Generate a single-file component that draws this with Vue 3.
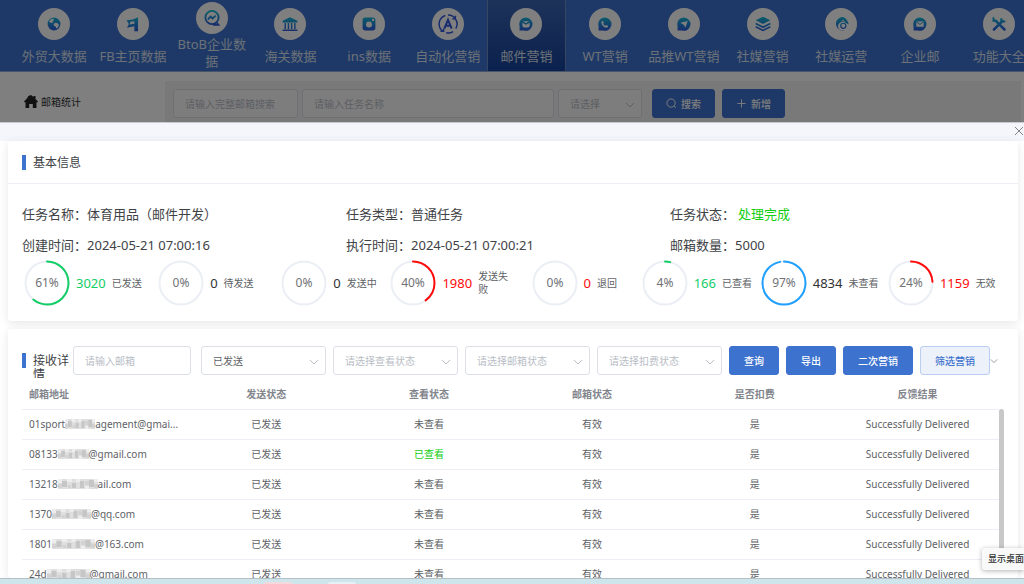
<script setup>
import { ref } from 'vue'

const navItems = [
  { label: '外贸大数据', icon: 'globe' },
  { label: 'FB主页数据', icon: 'flag' },
  { label: 'BtoB企业数据', icon: 'search', tall: true },
  { label: '海关数据', icon: 'bank' },
  { label: 'ins数据', icon: 'camera' },
  { label: '自动化营销', icon: 'auto' },
  { label: '邮件营销', icon: 'mail', active: true },
  { label: 'WT营销', icon: 'phone' },
  { label: '品推WT营销', icon: 'plane' },
  { label: '社媒营销', icon: 'layers' },
  { label: '社媒运营', icon: 'bird' },
  { label: '企业邮', icon: 'envelope' },
  { label: '功能大全', icon: 'tools' },
]

const info = [
  { label: '任务名称：', value: '体育用品（邮件开发）' },
  { label: '任务类型：', value: '普通任务' },
  { label: '任务状态：', value: '处理完成', done: true },
  { label: '创建时间：', value: '2024-05-21 07:00:16' },
  { label: '执行时间：', value: '2024-05-21 07:00:21' },
  { label: '邮箱数量：', value: '5000' },
]

const stats = [
  { percent: 61, count: 3020, label: '已发送', tone: 'green' },
  { percent: 0, count: 0, label: '待发送', tone: 'plain' },
  { percent: 0, count: 0, label: '发送中', tone: 'plain' },
  { percent: 40, count: 1980, label: '发送失败', tone: 'red' },
  { percent: 0, count: 0, label: '退回', tone: 'red' },
  { percent: 4, count: 166, label: '已查看', tone: 'green' },
  { percent: 97, count: 4834, label: '未查看', tone: 'blue' },
  { percent: 24, count: 1159, label: '无效', tone: 'red' },
]

const sent = ref('已发送')
const filters = ['请选择查看状态', '请选择邮箱状态', '请选择扣费状态']
const columns = ['邮箱地址', '发送状态', '查看状态', '邮箱状态', '是否扣费', '反馈结果']

const rows = [
  { head: '01sport', tail: 'agement@gmai...', mask: 30, seen: '未查看' },
  { head: '08133', tail: '@gmail.com', mask: 31, seen: '已查看' },
  { head: '13218', tail: 'ail.com', mask: 40, seen: '未查看' },
  { head: '1370', tail: '@qq.com', mask: 39, seen: '未查看' },
  { head: '1801', tail: '@163.com', mask: 43, seen: '未查看' },
  { head: '24d', tail: '@gmail.com', mask: 43, seen: '未查看' },
]
</script>

<template>
  <div class="page">
    <div class="backdrop">
      <svg class="defs" width="0" height="0" aria-hidden="true">
        <defs>
          <linearGradient id="ig" x1="0" y1="4" x2="0" y2="20" gradientUnits="userSpaceOnUse">
            <stop offset="0" stop-color="#12bcd8" />
            <stop offset="1" stop-color="#2f56dc" />
          </linearGradient>
        </defs>
      </svg>
      <nav class="nav">
        <a v-for="n in navItems" :key="n.label" href="#" class="nav-item" :class="{ active: n.active, tall: n.tall }">
          <span class="disc">
            <svg viewBox="0 0 24 24" fill="url(#ig)">
              <template v-if="n.icon === 'globe'">
                <circle cx="12" cy="12" r="7" />
                <path fill="#fff" d="M6.500 9.500l1.800-2.500 3-1 .5 2-1.500 1.500.5 1.500-2.300-.5zM11.500 12l2-1.500 2 .5 2 2-1.500 3-1.500 1-.5-2-2-1z" />
              </template>
              <path v-else-if="n.icon === 'flag'" d="M5 8l7-1 5.500-2.500V20h-4v-5.500l-8 1.500 2-4zM9 9.500l-.5 3 5-.8V9z" fill-rule="evenodd" />
              <g v-else-if="n.icon === 'search'" fill="none" stroke="url(#ig)" stroke-width="2" stroke-linecap="round">
                <circle cx="12" cy="11.500" r="7.200" />
                <path d="M17.500 17.500l1.500 2h-5M8 13l2.500-2.500 2 2 3-2.500" />
              </g>
              <g v-else-if="n.icon === 'bank'">
                <path d="M12 4.500l8 4v1.800H4V8.500zM4 18h16v1.600H4z" />
                <path d="M6 11h1.600v6.500H6zM9.500 11h1.600v6.500H9.500zM13 11h1.600v6.500H13zM16.500 11h1.600v6.500h-1.600z" />
              </g>
              <g v-else-if="n.icon === 'camera'">
                <rect x="5" y="5" width="14" height="14" rx="3" />
                <circle cx="12" cy="12.500" r="3.300" fill="#fff" />
                <circle cx="16.500" cy="7.500" r="1.300" fill="#fff" />
              </g>
              <g v-else-if="n.icon === 'auto'" fill="none" stroke="#2f56dc" stroke-width="1.600">
                <path d="M6.500 20A9.800 9.800 0 0 1 9 2.700M3.800 19.800h3.400v-3M12 2.200A9.800 9.800 0 0 1 20.500 17M10 21.600a9.800 9.800 0 0 0 7.500-1.300M16.800 6.500l3-.5.400-3" />
                <path d="M8 17l4-9.500L16 17M9.500 14h5" stroke-width="2.200" />
              </g>
              <g v-else-if="n.icon === 'mail'">
                <path d="M12 5a7.200 7.200 0 1 1-2.500 14H5v-4.500A7.200 7.200 0 0 1 12 5z" />
                <path fill="#fff" d="M8 10.500l4 2.200 4-2.200v3.200a2 2 0 0 1-2 2h-4a2 2 0 0 1-2-2zM8.500 9h7L12 11.200z" />
              </g>
              <g v-else-if="n.icon === 'phone'">
                <path d="M12 5a7.200 7.200 0 1 1-2.500 14H5v-4.500A7.200 7.200 0 0 1 12 5z" />
                <path fill="#fff" d="M9.500 8.500l1.300 2.200-.8 1c.5 1 1.300 1.700 2.300 2.200l1-.9 2.200 1.300c-.5 1.500-1.500 2-2.800 1.600-2.300-.7-4-2.400-4.600-4.700-.2-1.200.3-2.200 1.400-2.700z" />
              </g>
              <g v-else-if="n.icon === 'plane'">
                <path d="M12 5a7.200 7.200 0 1 1-2.500 14H5v-4.500A7.200 7.200 0 0 1 12 5z" />
                <path fill="#fff" d="M8 10.500l8-1.800-2.500 7.300-1.500-3z" />
              </g>
              <g v-else-if="n.icon === 'layers'">
                <path d="M12 4l8 4-8 4-8-4z" />
                <path fill="none" stroke="url(#ig)" stroke-width="1.800" d="M4 11.500l8 4 8-4M4 15l8 4 8-4" />
              </g>
              <g v-else-if="n.icon === 'bird'">
                <path d="M12 4.500c3.500-.5 5.500 1.500 7.500 5l1 3-3-1.500a5 5 0 1 0-1.500 8A7.500 7.500 0 1 1 12 4.500z" />
                <circle cx="14.500" cy="14" r="2.800" fill="#fff" stroke="url(#ig)" stroke-width="1.300" />
                <path fill="#fff" d="M13 7l4 2.500-3.500-.8z" />
              </g>
              <g v-else-if="n.icon === 'envelope'">
                <path d="M12 5a7.200 7.200 0 1 1-2.500 14H5v-4.500A7.200 7.200 0 0 1 12 5z" />
                <path fill="#fff" d="M8 9.200h8V15H8z" />
                <path fill="none" stroke="url(#ig)" d="M8 9.500l4 3 4-3" />
              </g>
              <g v-else fill="none" stroke="url(#ig)" stroke-width="2.800" stroke-linecap="round">
                <path d="M6.500 18L16 8.500M8.500 8.500L18 18" />
                <path d="M14.500 6.500v2.800h3.500M6 5.500v3h3" stroke-width="2.200" />
              </g>
            </svg>
          </span>
          <span class="nav-label">{{ n.label }}</span>
        </a>
      </nav>
      <div class="workspace">
        <aside class="side">
          <svg class="home" viewBox="0 0 14 14" fill="#222"><path d="M7 0l2.500 2V1h2v3L14 6.500l-.7.900-.8-.5V13H8.800V9H5.200v4H1.500V6.900l-.8.5L0 6.500 3.300 3l1-2z" /></svg>
          <span>邮箱统计</span>
        </aside>
        <form class="toolbar" @submit.prevent>
          <input class="field bar-mail" type="text" placeholder="请输入完整邮箱搜索" aria-label="邮箱" />
          <input class="field bar-task" type="text" placeholder="请输入任务名称" aria-label="任务名称" />
          <span class="pick bar-pick">
            <select class="field empty" aria-label="类型"><option>请选择</option></select>
            <svg class="chev" viewBox="0 0 10 10"><path d="M1 3l4 4 4-4" /></svg>
          </span>
          <button class="btn bar-first" type="submit">
            <svg viewBox="0 0 12 12"><circle cx="5.500" cy="5.500" r="4.500" /><path d="M8.800 8.800l2 2" /></svg>搜索
          </button>
          <button class="btn" type="button">
            <svg viewBox="0 0 12 12"><path d="M6 1.500v9M1.500 6h9" /></svg>新增
          </button>
        </form>
      </div>
    </div>

    <main class="drawer">
      <header class="drawer-head">
        <button class="close" type="button" aria-label="关闭">
          <svg viewBox="0 0 10 10"><path d="M1 1l8 8M9 1L1 9" /></svg>
        </button>
      </header>

      <section class="card">
        <div class="card-head"><h2 class="title">基本信息</h2></div>
        <dl class="info">
          <div v-for="i in info" :key="i.label" class="info-item">
            <dt>{{ i.label }}</dt>
            <dd :class="{ done: i.done }">{{ i.value }}</dd>
          </div>
        </dl>
        <div class="stats">
          <div v-for="s in stats" :key="s.label" class="stat" :class="s.tone">
            <svg class="ring" viewBox="0 0 46 46">
              <circle class="track" cx="23" cy="23" r="21.500" />
              <circle v-if="s.percent" class="arc" cx="23" cy="23" r="21.500" pathLength="100" :stroke-dasharray="`${s.percent} 100`" transform="rotate(-90 23 23)" />
              <text x="23" y="27" text-anchor="middle">{{ s.percent }}%</text>
            </svg>
            <span class="count">{{ s.count }}</span>
            <span class="stat-label">{{ s.label }}</span>
          </div>
        </div>
      </section>

      <section class="card detail">
        <form class="filters" @submit.prevent>
          <h2 class="title narrow">接收详情</h2>
          <input class="field mail" type="text" placeholder="请输入邮箱" aria-label="邮箱" />
          <span class="pick">
            <select v-model="sent" class="field" aria-label="发送状态"><option>已发送</option></select>
            <svg class="chev" viewBox="0 0 10 10"><path d="M1 3l4 4 4-4" /></svg>
          </span>
          <span v-for="f in filters" :key="f" class="pick">
            <select class="field empty" :aria-label="f"><option>{{ f }}</option></select>
            <svg class="chev" viewBox="0 0 10 10"><path d="M1 3l4 4 4-4" /></svg>
          </span>
          <button class="btn" type="submit">查询</button>
          <button class="btn" type="button">导出</button>
          <button class="btn" type="button">二次营销</button>
          <span class="more">
            <button class="btn light" type="button">筛选营销</button>
            <svg class="chev dark" viewBox="0 0 10 10"><path d="M1 3l4 4 4-4" /></svg>
          </span>
        </form>
        <div class="table-wrap">
          <table>
            <thead>
              <tr><th v-for="c in columns" :key="c" scope="col">{{ c }}</th></tr>
            </thead>
            <tbody>
              <tr v-for="r in rows" :key="r.head">
                <td>
                  <span class="email">{{ r.head }}<svg class="mask" :style="{ width: r.mask + 'px' }" viewBox="0 0 40 10" preserveAspectRatio="none" aria-hidden="true">
                    <rect width="40" height="10" fill="#dfdfdf" />
                    <path fill="#c6c6c6" d="M4 2h5v6H4zM14 4h4v5h-4zM22 2h4v7h-4zM31 1h5v7h-5z" />
                    <path fill="#ededed" d="M0 0h4v4H0zM9 0h5v3H9zM18 0h4v3h-4zM27 7h4v3h-4zM36 0h4v3h-4z" />
                    <path fill="#d2d2d2" d="M0 5h4v4H0zM10 6h3v3h-3zM27 2h4v4h-4zM36 5h4v4h-4z" />
                  </svg>{{ r.tail }}</span>
                </td>
                <td>已发送</td>
                <td :class="{ seen: r.seen === '已查看' }">{{ r.seen }}</td>
                <td>有效</td>
                <td>是</td>
                <td>Successfully Delivered</td>
              </tr>
            </tbody>
          </table>
          <span class="thumb"></span>
        </div>
      </section>
    </main>

    <div class="taskbar"><span class="app pink"></span><span class="app"></span></div>
    <div class="tip" role="tooltip">显示桌面</div>
  </div>
</template>

<style>
body {
  margin: 0;
  overflow: hidden;
}
</style>

<style scoped>
* {
  box-sizing: border-box;
}
.page {
  position: relative;
  display: flex;
  flex-direction: column;
  height: 100vh;
  overflow: hidden;
  background: #fff;
  color: #606266;
  font: 10px/16px "Noto Sans", "Noto Sans CJK SC", sans-serif;
}
button, input, select {
  font: inherit;
  margin: 0;
}
.defs {
  position: absolute;
}
.backdrop {
  position: relative;
  flex: none;
  overflow: hidden;
  background: #fff;
}
.backdrop::after {
  content: "";
  position: absolute;
  inset: 0;
  background: rgba(0, 0, 0, 0.5);
  pointer-events: none;
}
.nav {
  display: grid;
  grid-template-columns: repeat(13, minmax(0, 1fr));
  height: 72px;
  padding-left: 15px;
  margin-right: -14px;
  background: #3d72ce;
  border-bottom: 1px solid #8fa8d4;
}
.nav-item {
  display: flex;
  flex-direction: column;
  align-items: center;
  justify-content: center;
  gap: 8px;
  padding-top: 1px;
  color: #d8e0ee;
  font-size: 13px;
  line-height: 17px;
  text-align: center;
  text-decoration: none;
}
.nav-item.tall {
  gap: 2px;
}
.nav-item.active {
  background: linear-gradient(#3a66b4, #17439c);
  border: solid #6c8cc4;
  border-width: 0 1px;
}
.nav-label {
  width: 76px;
}
.disc {
  display: flex;
  align-items: center;
  justify-content: center;
  width: 32px;
  height: 32px;
  border-radius: 50%;
  background: #fff;
}
.disc svg {
  width: 22px;
  height: 22px;
}
.workspace {
  display: flex;
  height: 50px;
}
.side {
  display: flex;
  gap: 3px;
  width: 165px;
  flex: none;
  padding: 22px 0 0 24px;
  color: #303133;
}
.home {
  width: 14px;
  height: 14px;
  margin-top: 1px;
}
.toolbar {
  flex: 1;
  display: flex;
  align-items: flex-start;
  gap: 4px;
  margin: 9px 3px 0 0;
  padding: 8px;
  background: #f2f2f2;
}
.field {
  display: block;
  width: 100%;
  height: 29px;
  padding: 0 11px;
  border: 1px solid #dcdfe6;
  border-radius: 3px;
  background: #fff;
  color: #606266;
  outline: none;
  appearance: none;
}
.field::placeholder,
.field.empty {
  color: #b9bdc6;
  opacity: 1;
}
.toolbar .field {
  background: #fbfbfb;
}
.pick {
  position: relative;
  flex: 1 1 0;
  min-width: 0;
}
.chev {
  position: absolute;
  right: 7px;
  top: 11px;
  width: 10px;
  height: 10px;
  fill: none;
  stroke: #b9bdc6;
  pointer-events: none;
}
.toolbar .bar-mail {
  width: 125px;
}
.toolbar .bar-task {
  width: 252px;
}
.bar-pick {
  flex: 0 0 84px;
}
.btn {
  display: flex;
  align-items: center;
  justify-content: center;
  gap: 4px;
  flex: none;
  height: 29px;
  padding: 0 14px;
  border: 1px solid #3d72ce;
  border-radius: 3px;
  background: #3d72ce;
  color: #fff;
  font-weight: 500;
  white-space: nowrap;
}
.toolbar .btn {
  padding: 0 13px;
}
.btn svg {
  width: 11px;
  height: 11px;
  fill: none;
  stroke: #fff;
}
.bar-first {
  margin: 0 3px 0 6px;
}
.drawer {
  flex: 1;
  min-height: 0;
  display: flex;
  flex-direction: column;
  gap: 8px;
  overflow: hidden;
  background: #fff;
}
.drawer-head {
  display: flex;
  justify-content: flex-end;
  flex: none;
  height: 19px;
  margin-bottom: -8px;
  padding-top: 3px;
  border-top: 1px solid #c9cacd;
  background: #f5f6fb;
}
.close {
  display: block;
  width: 10px;
  height: 10px;
  padding: 0;
  border: 0;
  background: none;
}
.close svg {
  display: block;
  width: 10px;
  height: 10px;
  fill: none;
  stroke: #80838a;
}
.card {
  flex: none;
  margin: 0 6px 0 8px;
  border-radius: 3px;
  background: #fff;
  box-shadow: 0 2px 10px rgba(0, 0, 0, 0.1);
}
.card-head {
  padding: 13px 14px;
  border-bottom: 1px solid #ebeef5;
}
.title {
  position: relative;
  margin: 0;
  padding: 2px 0 0 11px;
  color: #404246;
  font-size: 12px;
  font-weight: 400;
  line-height: 14px;
}
.title::before {
  content: "";
  position: absolute;
  left: 0;
  top: 1px;
  width: 4px;
  height: 15px;
  background: #3d72ce;
}
.info {
  display: grid;
  grid-template-columns: repeat(3, 1fr);
  row-gap: 11px;
  margin: 0;
  padding: 20px 24px 5px 14px;
  color: #404246;
  font-size: 13px;
  line-height: 20px;
}
.info-item {
  display: flex;
}
.info dd {
  margin: 0;
}
.info dd.done {
  margin-left: 3px;
  color: #13ce13;
}
.stats {
  display: grid;
  grid-template-columns: 134fr 123fr 109fr 141fr 110fr 119fr 127fr 108fr;
  padding: 0 22px 15px 16px;
}
.stat {
  display: flex;
  align-items: center;
  gap: 6px;
}
.ring {
  flex: none;
  width: 46px;
  height: 46px;
}
.ring circle {
  fill: none;
  stroke-width: 2;
}
.ring .track {
  stroke: #ebeef5;
}
.ring .arc {
  stroke: #13ce66;
  stroke-linecap: round;
}
.red .arc {
  stroke: #ff0b0b;
}
.blue .arc {
  stroke: #20a0ff;
}
.ring text {
  fill: #707276;
  font-size: 12px;
}
.count {
  color: #303133;
  font-size: 13px;
}
.green .count {
  color: #13ce66;
}
.red .count {
  color: #ff0b0b;
}
.stat-label {
  max-width: 34px;
  line-height: 13px;
}
.detail {
  flex: 1;
  min-height: 0;
  display: flex;
  flex-direction: column;
  padding: 17px 14px 0;
}
.filters {
  display: flex;
  align-items: flex-start;
  gap: 7px;
  height: 32px;
  padding-right: 14px;
}
.filters .narrow {
  flex: none;
  width: 47px;
  height: 26px;
  margin: 6px -3px 0 0;
  overflow: hidden;
}
.filters .mail {
  flex: none;
  width: 118px;
  margin-right: 3px;
}
.more {
  display: flex;
  align-items: center;
}
.btn.light {
  border-color: #b9cdf0;
  background: #ecf1fa;
  color: #3d72ce;
}
.chev.dark {
  position: static;
  width: 8px;
  margin-right: -8px;
  stroke: #80838a;
}
.table-wrap {
  position: relative;
  flex: 1;
  min-height: 0;
  padding-right: 5px;
  overflow: hidden;
}
table {
  width: 100%;
  table-layout: fixed;
  border-collapse: collapse;
}
th, td {
  height: 30px;
  padding: 0;
  border-bottom: 1px solid #ebeef5;
  text-align: center;
  font-weight: 400;
  white-space: nowrap;
}
th {
  height: 31px;
  padding-top: 2px;
  color: #82858c;
  font-weight: 700;
}
th:first-child, td:first-child {
  padding-left: 7px;
  text-align: left;
}
td.seen {
  color: #13ce13;
}
.email {
  display: inline-flex;
  align-items: center;
}
.mask {
  height: 10px;
}
.thumb {
  position: absolute;
  right: 0;
  top: 31px;
  width: 5px;
  height: 144px;
  border-radius: 3px;
  background: #c8c8c8;
}
.taskbar {
  display: flex;
  align-items: flex-end;
  gap: 36px;
  flex: none;
  height: 6px;
  padding-left: 264px;
  border-top: 1px solid #b4bfc6;
  background: #cfe5ec;
}
.app {
  width: 28px;
  height: 2px;
  border-radius: 2px 2px 0 0;
  background: #e6f1f6;
}
.app.pink {
  background: #f3d9dc;
}
.tip {
  position: absolute;
  right: 0;
  bottom: 14px;
  padding: 3px 0 3px 6px;
  border-radius: 3px 0 0 3px;
  background: #f9f9f9;
  box-shadow: 0 1px 5px rgba(0, 0, 0, 0.3);
  color: #303133;
  font-size: 9px;
  font-weight: 500;
}
</style>
